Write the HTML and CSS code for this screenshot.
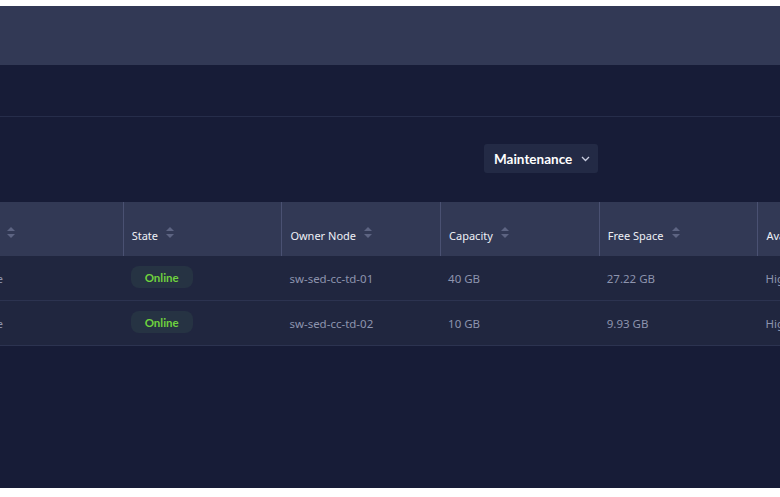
FILE: index.html
```html
<!DOCTYPE html>
<html>
<head>
<meta charset="utf-8">
<link rel="stylesheet" href="styles.css">
</head>
<body>
<div class="app">
  <div class="topbar"></div>
  <div class="subbar"></div>
  <div class="toolbar">
    <button class="menu-btn">Maintenance
      <svg class="chev" width="9" height="6" viewBox="0 0 9 6"><path d="M1 1l3.5 3.5L8 1" fill="none" stroke="#c9cde0" stroke-width="1.3"/></svg>
    </button>
  </div>
  <div class="table-wrap">
    <div class="table">
      <div class="row head">
        <div class="cell"><span>Drive</span><svg class="sort" width="8" height="11" viewBox="0 0 8 11"><path d="M4 0L8 4H0z M4 11L0 7h8z" fill="#5d6482"/></svg></div>
        <div class="cell"><span>State</span><svg class="sort" width="8" height="11" viewBox="0 0 8 11"><path d="M4 0L8 4H0z M4 11L0 7h8z" fill="#5d6482"/></svg></div>
        <div class="cell"><span>Owner Node</span><svg class="sort" width="8" height="11" viewBox="0 0 8 11"><path d="M4 0L8 4H0z M4 11L0 7h8z" fill="#5d6482"/></svg></div>
        <div class="cell"><span>Capacity</span><svg class="sort" width="8" height="11" viewBox="0 0 8 11"><path d="M4 0L8 4H0z M4 11L0 7h8z" fill="#5d6482"/></svg></div>
        <div class="cell"><span>Free Space</span><svg class="sort" width="8" height="11" viewBox="0 0 8 11"><path d="M4 0L8 4H0z M4 11L0 7h8z" fill="#5d6482"/></svg></div>
        <div class="cell"><span>Availability</span></div>
      </div>
      <div class="row body">
        <div class="cell">Share</div>
        <div class="cell"><span class="badge">Online</span></div>
        <div class="cell">sw-sed-cc-td-01</div>
        <div class="cell">40 GB</div>
        <div class="cell">27.22 GB</div>
        <div class="cell">High</div>
      </div>
      <div class="row body">
        <div class="cell">Share</div>
        <div class="cell"><span class="badge">Online</span></div>
        <div class="cell">sw-sed-cc-td-02</div>
        <div class="cell">10 GB</div>
        <div class="cell">9.93 GB</div>
        <div class="cell">High</div>
      </div>
    </div>
  </div>
</div>
</body>
</html>
```

FILE: styles.css
```css
html, body {
  margin: 0;
  padding: 0;
  background: #ffffff;
}
body {
  font-family: "Noto Sans", Lato, sans-serif;
  overflow: hidden;
}
.app {
  margin-top: 6px;
  height: 482px;
  width: 780px;
  background: #171c37;
  overflow: hidden;
  display: flex;
  flex-direction: column;
}
.topbar {
  height: 59px;
  background: #323955;
  flex: none;
}
.subbar {
  height: 51px;
  border-bottom: 1px solid #262d4a;
  flex: none;
}
.toolbar {
  height: 85px;
  flex: none;
  display: flex;
  align-items: center;
  padding-left: 484px;
}
.menu-btn {
  height: 29px;
  width: 114px;
  margin-top: -2px;
  background: #232a45;
  border: none;
  border-radius: 3px;
  color: #ffffff;
  font-family: Lato, "Noto Sans", sans-serif;
  font-weight: 700;
  font-size: 13.5px;
  display: flex;
  align-items: center;
  padding: 0 0 0 10px;
  gap: 9px;
}
.chev {
  margin-top: 1px;
}
.table-wrap {
  overflow: hidden;
  flex: none;
}
.table {
  margin-left: -36px;
  width: 952px;
}
.row {
  display: grid;
  grid-template-columns: 158.7px 158.7px 158.7px 158.7px 158.7px 158.7px;
}
.row.head {
  height: 54px;
  background: #323955;
}
.row.head .cell {
  display: flex;
  align-items: center;
  gap: 8px;
  padding: 13px 8px 0;
  border-left: 1px solid #4a5172;
  color: #eef0f6;
  font-size: 11px;
}
.row.head .cell:first-child {
  border-left: none;
}
.sort {
  margin-top: -6px;
}
.row.body {
  height: 44px;
  background: #20263f;
  border-bottom: 1px solid #2c3350;
}
.row.body .cell {
  display: flex;
  align-items: center;
  padding: 0 8px;
  color: #8d94ae;
  font-size: 11.5px;
}
.badge {
  display: inline-flex;
  align-items: center;
  justify-content: center;
  width: 62px;
  height: 22px;
  margin-top: -2px;
  border-radius: 8px;
  background: #263343;
  color: #6fd23e;
  font-family: Lato, "Noto Sans", sans-serif;
  font-weight: 700;
  font-size: 11.5px;
}
```
